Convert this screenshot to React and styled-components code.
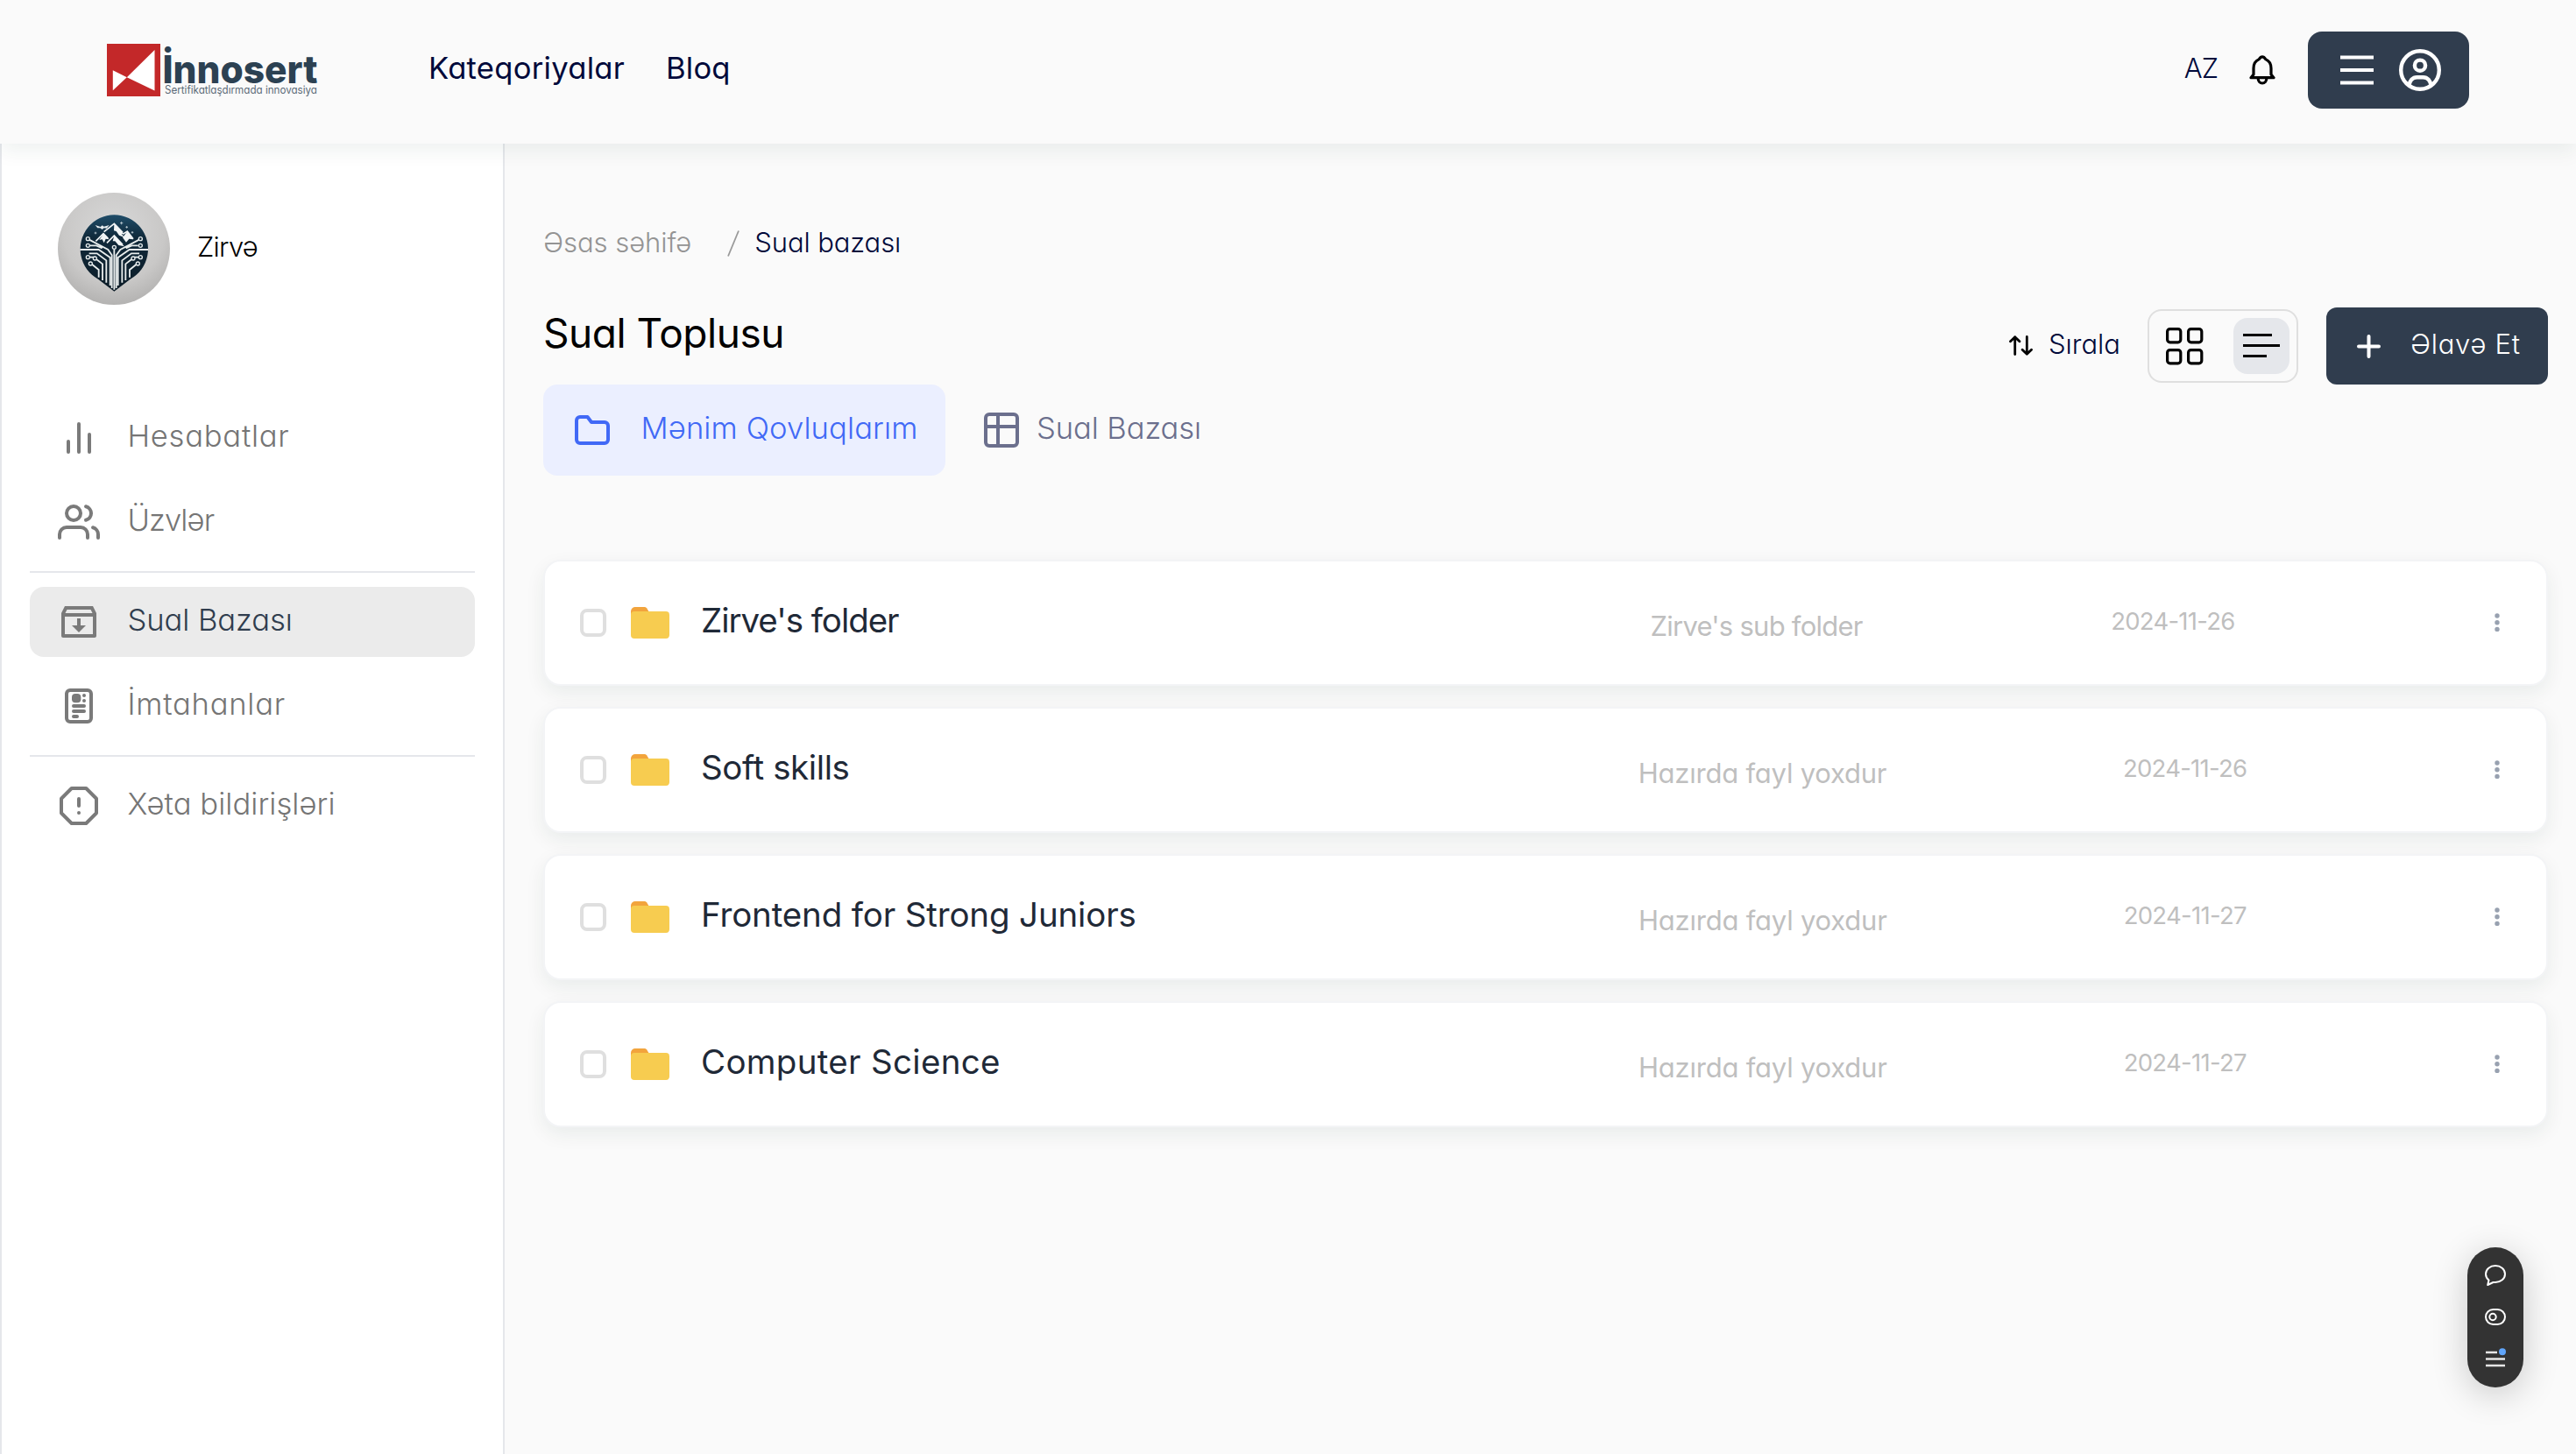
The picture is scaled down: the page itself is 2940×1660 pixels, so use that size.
import React from "react";
import styled, { createGlobalStyle } from "styled-components";
import { RiInboxArchiveLine } from "react-icons/ri";

const Global = createGlobalStyle`
  * { box-sizing: border-box; }
  body {
    margin: 0;
    background: #fafafa;
    font-family: Inter, "Liberation Sans", sans-serif;
    font-feature-settings: "cv11";
  }
`;

const SHADOW = "0 8px 22px rgba(20, 50, 40, 0.07)";

const Label = styled.span`
  font-size: ${(p) => p.$size || 31}px;
  font-weight: ${(p) => p.$weight || 300};
  letter-spacing: ${(p) => p.$spacing || 0}px;
  color: ${(p) => p.$color || "#7a7a7a"};
  line-height: 1.2;
  padding-bottom: 0.15em;
  white-space: nowrap;
`;

const Page = styled.div`
  width: 2940px;
  height: 1660px;
  display: flex;
  flex-direction: column;
  overflow: hidden;
`;

const Header = styled.header`
  height: 164px;
  flex: none;
  display: flex;
  align-items: center;
  padding: 0 122px 4px;
  background: #fafafa;
  box-shadow: ${SHADOW};
  position: relative;
  z-index: 1;
`;

const LogoMark = styled.svg`
  overflow: visible;
`;

const Nav = styled.nav`
  display: flex;
  gap: 47px;
  margin-left: 126px;
  flex: 1;
`;

const HeaderTools = styled.div`
  display: flex;
  align-items: center;
`;

const BellIcon = styled.svg`
  margin: 0 37px 0 36px;
`;

const MenuButton = styled.button`
  width: 184px;
  height: 88px;
  border: 0;
  border-radius: 16px;
  background: #303d4e;
  display: flex;
  align-items: center;
  gap: 29px;
  padding: 0 32px 0 37px;
`;

const Body = styled.div`
  flex: 1;
  display: flex;
`;

const Sidebar = styled.aside`
  width: 576px;
  flex: none;
  padding: 56px 32px 0;
  background: #fff;
  border: solid #e5e7eb;
  border-width: 0 2px;
`;

const Profile = styled.div`
  display: flex;
  align-items: center;
  gap: 31px;
  padding-left: 32px;
  margin-bottom: 112px;
`;

const Avatar = styled.svg`
  width: 128px;
  height: 128px;
  border-radius: 50%;
`;

const MenuItem = styled.div`
  height: 80px;
  display: flex;
  align-items: center;
  gap: 31.5px;
  padding-left: 32px;
  border-radius: 16px;
  color: #7a7a7a;
  background: ${(p) => (p.$active ? "#ebebeb" : "transparent")};
`;

const MenuGroup = styled.div`
  display: flex;
  flex-direction: column;
  gap: 16px;
  padding-bottom: 16px;
  margin-bottom: 16px;
  border-bottom: ${(p) => (p.$last ? "0" : "2px solid #e5e7eb")};
`;

const Main = styled.main`
  flex: 1;
  padding: 91px 32px 0 44px;
`;

const Breadcrumb = styled.div`
  display: flex;
  align-items: center;
  height: 48px;
`;

const SlashIcon = styled.svg`
  margin: 0 17px 2px 41px;
`;

const HeadRow = styled.div`
  display: flex;
  justify-content: space-between;
  height: 88px;
  margin-top: 48px;
`;

const Title = styled(Label)`
  padding-top: 1.5px;
`;

const Tools = styled.div`
  display: flex;
  align-items: center;
`;

const Sort = styled.div`
  display: flex;
  align-items: center;
  gap: 18px;
  margin-right: 31px;
`;

const ViewToggle = styled.div`
  width: 172px;
  height: 84px;
  margin-right: 32px;
  padding: 0 8px 0 19px;
  display: flex;
  align-items: center;
  justify-content: space-between;
  border: 2px solid #dfdfdf;
  border-radius: 16px;
`;

const ViewActive = styled.div`
  width: 64px;
  height: 64px;
  border-radius: 16px;
  background: #e5e7eb;
  display: grid;
  place-items: center;
`;

const AddButton = styled.button`
  width: 253px;
  height: 88px;
  border: 0;
  border-radius: 12px;
  background: #303d4e;
  display: flex;
  align-items: center;
  gap: 34.5px;
  padding: 0 0 0 34.5px;
  font-family: inherit;
  font-feature-settings: inherit;
`;

const Tabs = styled.div`
  display: flex;
  gap: 12px;
`;

const Tab = styled.div`
  height: 104px;
  display: flex;
  align-items: center;
  gap: ${(p) => p.$gap}px;
  width: ${(p) => p.$width}px;
  padding-left: ${(p) => (p.$active ? 36 : 32)}px;
  border-radius: 16px;
  background: ${(p) => (p.$active ? "#ebefff" : "transparent")};
`;

const List = styled.div`
  display: flex;
  flex-direction: column;
  gap: 24px;
  margin-top: 96px;
`;

const Card = styled.article`
  height: 144px;
  display: flex;
  align-items: center;
  justify-content: space-between;
  padding: 0 40px;
  border: 2px solid #f3f4f6;
  border-radius: 20px;
  background: #fff;
  box-shadow: ${SHADOW};
`;

const CardMain = styled.div`
  width: 938px;
  display: flex;
  align-items: center;
`;

const Checkbox = styled.span`
  width: 30px;
  height: 32px;
  border: 4px solid #dfdfdf;
  border-radius: 8px;
`;

const FolderIcon = styled.svg`
  margin: 0 36px 0 28px;
`;

const SubLabel = styled(Label)`
  padding: 7px 0 0;
`;

const DateLabel = styled(Label)`
  padding-bottom: 2.5px;
`;

const Dots = styled.svg`
  width: 32px;
  height: 32px;
`;

const Widget = styled.div`
  position: fixed;
  left: 2816px;
  top: 1424px;
  width: 64px;
  height: 160px;
  padding: 20px 0 23px;
  display: flex;
  flex-direction: column;
  align-items: center;
  justify-content: space-between;
  border-radius: 32px;
  background: #333;
  box-shadow: 0 8px 40px rgba(0, 0, 0, 0.2);
`;

const Logo = () => (
  <LogoMark width="241" height="60" viewBox="0 0 241 60">
    <rect width="61" height="60" fill="#c32829" />
    <path d="M54.5 7v46.500L22.800 38.300zM6.800 30.300v23l16-15z" fill="#fff" />
    <text x="63.500" y="45" fontSize="44" fontWeight="800" textLength="177" lengthAdjust="spacingAndGlyphs" fill="#2c4152">İnnosert</text>
    <text x="66" y="56.700" fontSize="12.600" fontWeight="400" textLength="174" lengthAdjust="spacingAndGlyphs" fill="#5c6b78">Sertifikatlaşdırmada innovasiya</text>
  </LogoMark>
);

const Bell = () => (
  <BellIcon width="30" height="34" viewBox="0 0 30 34" fill="none" stroke="#000" strokeWidth="3.200" strokeLinejoin="round">
    <path d="M5 22V15C5 9.500 7.500 6.200 11.300 4.600Q13 1.900 15 1.900T18.700 4.600C22.500 6.200 25 9.500 25 15v7l3 3.700H2z" />
    <path d="M10.200 26.500a4.800 5.500 0 0 0 9.600 0" />
  </BellIcon>
);

const Hamburger = () => (
  <svg width="38" height="34" viewBox="0 0 38 34" stroke="#fff" strokeWidth="4">
    <path d="M0 2.500h38M0 17h38M0 31.500h38" />
  </svg>
);

const UserCircle = () => (
  <svg width="48" height="48" viewBox="0 0 48 48" fill="none" stroke="#fff" strokeWidth="4.400">
    <circle cx="24" cy="24" r="21.800" />
    <circle cx="24" cy="18.700" r="6.100" />
    <path d="M11.500 42c.6-6 4-9.800 9-9.800h7c5 0 8.400 3.800 9 9.800" />
  </svg>
);

const line = { width: 48, height: 48, viewBox: "0 0 24 24", fill: "none", stroke: "currentColor", strokeWidth: 2, strokeLinecap: "round", strokeLinejoin: "round" };

const BarsIcon = () => (
  <svg {...line}><path d="M18 20V10M12 20V4M6 20v-6" /></svg>
);
const UsersIcon = () => (
  <svg {...line}>
    <path d="M17 21v-2a4 4 0 0 0-4-4H5a4 4 0 0 0-4 4v2M23 21v-2a4 4 0 0 0-3-3.870M16 3.130a4 4 0 0 1 0 7.750" />
    <circle cx="9" cy="7" r="4" />
  </svg>
);
const AlertIcon = () => (
  <svg {...line}><path d="M7.860 2h8.280L22 7.860v8.280L16.140 22H7.860L2 16.140V7.860zM12 8v4M12 16h.01" /></svg>
);
const ExamIcon = () => (
  <svg width="48" height="48" viewBox="18 306 144 144" fill="none" stroke="currentColor" strokeWidth="12" strokeLinecap="round">
    <rect x="48" y="324" width="84" height="108" rx="12" />
    <rect x="66" y="336" width="31" height="31" rx="12" fill="currentColor" stroke="none" />
    <path d="M108 342h.01M108 360h.01M72 378h36M72 396h36M72 414h12" />
  </svg>
);

const TRACES = "M94 213H158L197 240V336M327 213H263L224 240V336M124 178L190 213L203 232V345M298 178L232 213L218 232V345M128 199H150L170 208M293 199H271L251 208M211 212V350M125 226H152L184 250V326M297 226H270L238 250V326M124 239H141L171 262V318M298 239H280L250 262V318M132 261L158 282V308M290 261L264 282V308";
const NODES = [[121, 176], [121, 199], [301, 176], [301, 199], [121, 239], [145, 243], [301, 239], [276, 243], [130, 261], [292, 261], [211, 205]];

const ZirveAvatar = () => (
  <Avatar viewBox="18 18 384 384">
    <defs>
      <radialGradient id="silver" cx="0.5" cy="0.35" r="0.75">
        <stop offset="0" stopColor="#d9d9d9" />
        <stop offset="0.6" stopColor="#c9c8c7" />
        <stop offset="1" stopColor="#a9a8a7" />
      </radialGradient>
      <linearGradient id="night" x1="0" y1="0" x2="0" y2="1">
        <stop offset="0" stopColor="#1f4d69" />
        <stop offset="0.3" stopColor="#10293a" />
        <stop offset="1" stopColor="#0c1c27" />
      </linearGradient>
    </defs>
    <rect x="18" y="18" width="384" height="384" fill="url(#silver)" />
    <path d="M156 314A116 117 0 1 1 266 314L211 356z" fill="url(#night)" />
    <path d="M148 184L174 158L190 174M176 152L211 124L240 154M186 190L211 165L240 196M240 160L256 150L276 176" fill="none" stroke="#f2f5f6" strokeWidth="5" />
    <path d="M211 124L244 158L236 160L248 172L228 164L218 150L210 148zM174 158L194 178L182 176L176 190L170 178L160 180zM211 165L236 192L246 202L226 198L214 184L206 184zM256 150L276 178L262 176L252 188L240 172z" fill="#f2f5f6" />
    <path d="M146 129l18 6 6-5 6 4 18-5-9 11-9-1-6 5-7-5-9 0z" fill="#e6ecef" />
    <path d="M236 117v10M231 122h10M254 132v8M250 136h8M273 150v8M269 154h8M147 152v8M143 156h8" stroke="#c6d4db" strokeWidth="2.500" />
    <path d={TRACES} fill="none" stroke="#e8eded" strokeWidth="5.500" />
    {NODES.map(([x, y]) => (
      <circle key={`${x}-${y}`} cx={x} cy={y} r="6" fill="#10293a" stroke="#e8eded" strokeWidth="4" />
    ))}
  </Avatar>
);

const MENU = [
  [
    { text: "Hesabatlar", icon: <BarsIcon />, spacing: 0.74 },
    { text: "Üzvlər", icon: <UsersIcon />, spacing: -0.9 },
  ],
  [
    { text: "Sual Bazası", icon: <RiInboxArchiveLine size={48} />, spacing: -0.08, active: true },
    { text: "İmtahanlar", icon: <ExamIcon />, spacing: 0.75 },
  ],
  [{ text: "Xəta bildirişləri", icon: <AlertIcon />, spacing: 0.06 }],
];

const ROWS = [
  { title: "Zirve's folder", spacing: -1.04, sub: "Zirve's sub folder", subSpacing: -0.75, date: "2024-11-26", dateSpacing: -0.75 },
  { title: "Soft skills", spacing: -0.4, sub: "Hazırda fayl yoxdur", subSpacing: -0.22, date: "2024-11-26", dateSpacing: -0.75 },
  { title: "Frontend for Strong Juniors", spacing: -0.15, sub: "Hazırda fayl yoxdur", subSpacing: -0.22, date: "2024-11-27", dateSpacing: -0.7 },
  { title: "Computer Science", spacing: 0.3, sub: "Hazırda fayl yoxdur", subSpacing: -0.22, date: "2024-11-27", dateSpacing: -0.7 },
];

export default function App() {
  return (
    <Page>
      <Global />
      <Header>
        <Logo />
        <Nav>
          <Label $size={34.6} $weight={400} $spacing={0.27} $color="#00093a">Kateqoriyalar</Label>
          <Label $size={34.6} $weight={400} $spacing={0.2} $color="#00093a">Bloq</Label>
        </Nav>
        <HeaderTools>
          <Label $spacing={-0.9} $color="#00093a">AZ</Label>
          <Bell />
          <MenuButton>
            <Hamburger />
            <UserCircle />
          </MenuButton>
        </HeaderTools>
      </Header>
      <Body>
        <Sidebar>
          <Profile>
            <ZirveAvatar />
            <Label $spacing={-0.75} $color="#000">Zirvə</Label>
          </Profile>
          {MENU.map((group, i) => (
            <MenuGroup key={i} $last={i === MENU.length - 1}>
              {group.map((m) => (
                <MenuItem key={m.text} $active={m.active}>
                  {m.icon}
                  <Label $size={34.6} $spacing={m.spacing} $color={m.active ? "#303d4e" : "#757575"}>{m.text}</Label>
                </MenuItem>
              ))}
            </MenuGroup>
          ))}
        </Sidebar>
        <Main>
          <Breadcrumb>
            <Label $spacing={-0.05} $color="#949494">Əsas səhifə</Label>
            <SlashIcon width="14" height="30" viewBox="0 0 14 30" stroke="#999" strokeWidth="1.800">
              <path d="M1 29.500L13 .5" />
            </SlashIcon>
            <Label $spacing={-0.1} $color="#00093a">Sual bazası</Label>
          </Breadcrumb>
          <HeadRow>
            <Title $size={46} $weight={400} $spacing={-0.47} $color="#000">Sual Toplusu</Title>
            <Tools>
              <Sort>
                <svg width="27" height="23" viewBox="0 0 27 23" fill="none" stroke="#000" strokeWidth="2.800" strokeLinecap="round" strokeLinejoin="round">
                  <path d="M6.700 21.500V1.700M1.500 6.700l5.200-5 5.200 5M20.300 1.500v19.800M15.100 16.300l5.200 5 5.200-5" />
                </svg>
                <Label $color="#00093a">Sırala</Label>
              </Sort>
              <ViewToggle>
                <svg width="43" height="43" viewBox="0 0 43 43" fill="none" stroke="#000" strokeWidth="3.200">
                  <rect x="1.600" y="1.600" width="15.200" height="15.200" rx="3" />
                  <rect x="25.600" y="1.600" width="15.200" height="15.200" rx="3" />
                  <rect x="1.600" y="25.600" width="15.200" height="15.200" rx="3" />
                  <rect x="25.600" y="25.600" width="15.200" height="15.200" rx="3" />
                </svg>
                <ViewActive>
                  <svg width="42" height="28" viewBox="0 0 42 28" stroke="#000" strokeWidth="3">
                    <path d="M0 1.500h33M0 13.500h42M0 25.500h27" />
                  </svg>
                </ViewActive>
              </ViewToggle>
              <AddButton>
                <svg width="27" height="27" viewBox="0 0 27 27" stroke="#fff" strokeWidth="4" strokeLinecap="round">
                  <path d="M13.500 2v23M2 13.500h23" />
                </svg>
                <Label $spacing={0.7} $color="#fff">Əlavə Et</Label>
              </AddButton>
            </Tools>
          </HeadRow>
          <Tabs>
            <Tab $active $width={459} $gap={35.5}>
              <svg width="40" height="34" viewBox="0 0 40 34" fill="none" stroke="#4169f6" strokeWidth="4" strokeLinejoin="round">
                <path d="M2 6a4 4 0 0 1 4-4h8.500l4.500 6H34a4 4 0 0 1 4 4v16a4 4 0 0 1-4 4H6a4 4 0 0 1-4-4z" />
              </svg>
              <Label $size={34.6} $spacing={0.11} $color="#4169f6">Mənim Qovluqlarım</Label>
            </Tab>
            <Tab $width={300} $gap={20}>
              <svg width="40" height="40" viewBox="0 0 40 40" fill="none" stroke="#6b6f8d" strokeWidth="4">
                <rect x="2" y="2" width="36" height="36" rx="4" />
                <path d="M2 16h36M16 2v36" />
              </svg>
              <Label $size={34.6} $spacing={-0.1} $color="#6b6f8d">Sual Bazası</Label>
            </Tab>
          </Tabs>
          <List>
            {ROWS.map((r) => (
              <Card key={r.title}>
                <CardMain>
                  <Checkbox />
                  <FolderIcon width="44" height="36" viewBox="0 0 44 36">
                    <path d="M0 5a5 5 0 0 1 5-5h10.500q1.500 0 2.500 1.200L21 6v8H0z" fill="#f2a43c" />
                    <rect y="5" width="44" height="31" rx="4" fill="#f7cc50" />
                  </FolderIcon>
                  <Label $size={38.5} $weight={400} $spacing={r.spacing} $color="#1f2937">{r.title}</Label>
                </CardMain>
                <SubLabel $weight={400} $spacing={r.subSpacing} $color="#bfbfbf">{r.sub}</SubLabel>
                <DateLabel $size={27.5} $weight={400} $spacing={r.dateSpacing} $color="#bfbfbf">{r.date}</DateLabel>
                <Dots viewBox="0 0 32 32" fill="#98a1b0">
                  <circle cx="16" cy="8" r="2.700" />
                  <circle cx="16" cy="15.700" r="2.700" />
                  <circle cx="16" cy="23.400" r="2.700" />
                </Dots>
              </Card>
            ))}
          </List>
        </Main>
      </Body>
      <Widget>
        <svg width="24" height="24" viewBox="0 0 24 24" fill="none" stroke="#fff" strokeWidth="2" strokeLinejoin="round">
          <path d="M3.200 23L4.500 17.500C2 15.500 1 13.300 1 10.500 1 5 6 1 12 1s11 4 11 9.500S18 20 12 20H9.500Z" />
        </svg>
        <svg width="24" height="19" viewBox="0 0 24 19" fill="none" stroke="#fff" strokeWidth="2">
          <rect x="1" y="1" width="22" height="17" rx="8.500" />
          <circle cx="9" cy="9.500" r="3.700" />
        </svg>
        <svg width="24" height="22" viewBox="0 0 24 22" stroke="#e6e6e6" strokeWidth="2.600">
          <path d="M1 5h13M1 12.500h22M1 20h22" />
          <circle cx="20" cy="4.300" r="4" fill="#60a5fa" stroke="none" />
        </svg>
      </Widget>
    </Page>
  );
}
